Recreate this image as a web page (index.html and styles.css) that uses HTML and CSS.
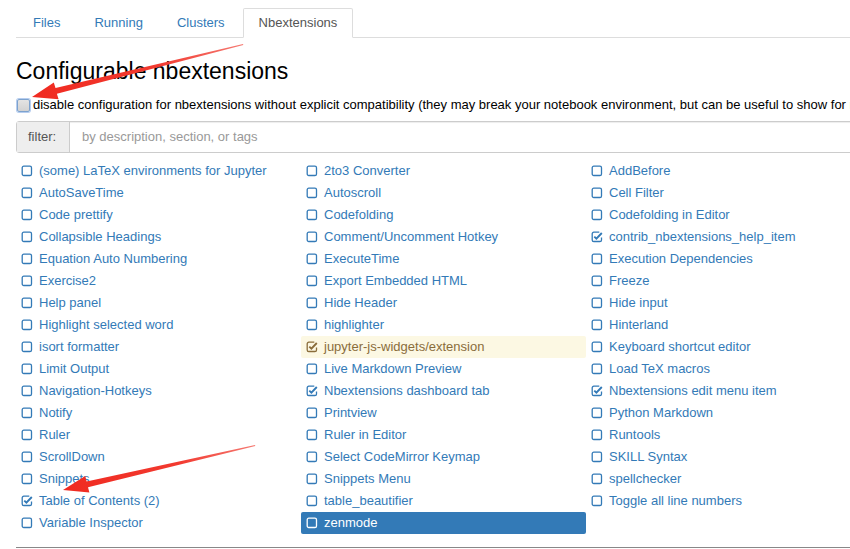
FILE: index.html
```html
<!DOCTYPE html>
<html>
<head>
<meta charset="utf-8">
<link rel="stylesheet" href="styles.css">
</head>
<body>
<div class="page">
  <ul class="tabs">
    <li class="tab"><a>Files</a></li>
    <li class="tab"><a>Running</a></li>
    <li class="tab"><a>Clusters</a></li>
    <li class="tab active"><a>Nbextensions</a></li>
  </ul>
  <h1 class="title">Configurable nbextensions</h1>
  <div class="compat">
    <span class="native-box"></span><span class="compat-text">disable configuration for nbextensions without explicit compatibility (they may break your notebook environment, but can be useful to show for <span class="warn-link">nbextension development)</span></span>
  </div>
  <div class="filter">
    <span class="filter-label">filter:</span>
    <span class="filter-input">by description, section, or tags</span>
  </div>
  <div class="columns">
    <ul class="col">
      <li class="item"><svg class="cb" viewBox="0 0 12 12"><rect x="1.2" y="1.2" width="9.3" height="9.3" rx="1.6"/></svg>(some) LaTeX environments for Jupyter</li>
      <li class="item"><svg class="cb" viewBox="0 0 12 12"><rect x="1.2" y="1.2" width="9.3" height="9.3" rx="1.6"/></svg>AutoSaveTime</li>
      <li class="item"><svg class="cb" viewBox="0 0 12 12"><rect x="1.2" y="1.2" width="9.3" height="9.3" rx="1.6"/></svg>Code prettify</li>
      <li class="item"><svg class="cb" viewBox="0 0 12 12"><rect x="1.2" y="1.2" width="9.3" height="9.3" rx="1.6"/></svg>Collapsible Headings</li>
      <li class="item"><svg class="cb" viewBox="0 0 12 12"><rect x="1.2" y="1.2" width="9.3" height="9.3" rx="1.6"/></svg>Equation Auto Numbering</li>
      <li class="item"><svg class="cb" viewBox="0 0 12 12"><rect x="1.2" y="1.2" width="9.3" height="9.3" rx="1.6"/></svg>Exercise2</li>
      <li class="item"><svg class="cb" viewBox="0 0 12 12"><rect x="1.2" y="1.2" width="9.3" height="9.3" rx="1.6"/></svg>Help panel</li>
      <li class="item"><svg class="cb" viewBox="0 0 12 12"><rect x="1.2" y="1.2" width="9.3" height="9.3" rx="1.6"/></svg>Highlight selected word</li>
      <li class="item"><svg class="cb" viewBox="0 0 12 12"><rect x="1.2" y="1.2" width="9.3" height="9.3" rx="1.6"/></svg>isort formatter</li>
      <li class="item"><svg class="cb" viewBox="0 0 12 12"><rect x="1.2" y="1.2" width="9.3" height="9.3" rx="1.6"/></svg>Limit Output</li>
      <li class="item"><svg class="cb" viewBox="0 0 12 12"><rect x="1.2" y="1.2" width="9.3" height="9.3" rx="1.6"/></svg>Navigation-Hotkeys</li>
      <li class="item"><svg class="cb" viewBox="0 0 12 12"><rect x="1.2" y="1.2" width="9.3" height="9.3" rx="1.6"/></svg>Notify</li>
      <li class="item"><svg class="cb" viewBox="0 0 12 12"><rect x="1.2" y="1.2" width="9.3" height="9.3" rx="1.6"/></svg>Ruler</li>
      <li class="item"><svg class="cb" viewBox="0 0 12 12"><rect x="1.2" y="1.2" width="9.3" height="9.3" rx="1.6"/></svg>ScrollDown</li>
      <li class="item"><svg class="cb" viewBox="0 0 12 12"><rect x="1.2" y="1.2" width="9.3" height="9.3" rx="1.6"/></svg>Snippets</li>
      <li class="item"><svg class="cb" viewBox="0 0 12 12"><path class="box" d="M8.3 1.2H2.8A1.6 1.6 0 0 0 1.2 2.8V8.9A1.6 1.6 0 0 0 2.8 10.5H8.9A1.6 1.6 0 0 0 10.5 8.9V6.4"/><path class="tick" d="M3.3 5.6L5.4 7.6L10.8 2"/></svg>Table of Contents (2)</li>
      <li class="item"><svg class="cb" viewBox="0 0 12 12"><rect x="1.2" y="1.2" width="9.3" height="9.3" rx="1.6"/></svg>Variable Inspector</li>
    </ul>
    <ul class="col">
      <li class="item"><svg class="cb" viewBox="0 0 12 12"><rect x="1.2" y="1.2" width="9.3" height="9.3" rx="1.6"/></svg>2to3 Converter</li>
      <li class="item"><svg class="cb" viewBox="0 0 12 12"><rect x="1.2" y="1.2" width="9.3" height="9.3" rx="1.6"/></svg>Autoscroll</li>
      <li class="item"><svg class="cb" viewBox="0 0 12 12"><rect x="1.2" y="1.2" width="9.3" height="9.3" rx="1.6"/></svg>Codefolding</li>
      <li class="item"><svg class="cb" viewBox="0 0 12 12"><rect x="1.2" y="1.2" width="9.3" height="9.3" rx="1.6"/></svg>Comment/Uncomment Hotkey</li>
      <li class="item"><svg class="cb" viewBox="0 0 12 12"><rect x="1.2" y="1.2" width="9.3" height="9.3" rx="1.6"/></svg>ExecuteTime</li>
      <li class="item"><svg class="cb" viewBox="0 0 12 12"><rect x="1.2" y="1.2" width="9.3" height="9.3" rx="1.6"/></svg>Export Embedded HTML</li>
      <li class="item"><svg class="cb" viewBox="0 0 12 12"><rect x="1.2" y="1.2" width="9.3" height="9.3" rx="1.6"/></svg>Hide Header</li>
      <li class="item"><svg class="cb" viewBox="0 0 12 12"><rect x="1.2" y="1.2" width="9.3" height="9.3" rx="1.6"/></svg>highlighter</li>
      <li class="item warning"><svg class="cb" viewBox="0 0 12 12"><path class="box" d="M8.3 1.2H2.8A1.6 1.6 0 0 0 1.2 2.8V8.9A1.6 1.6 0 0 0 2.8 10.5H8.9A1.6 1.6 0 0 0 10.5 8.9V6.4"/><path class="tick" d="M3.3 5.6L5.4 7.6L10.8 2"/></svg>jupyter-js-widgets/extension</li>
      <li class="item"><svg class="cb" viewBox="0 0 12 12"><rect x="1.2" y="1.2" width="9.3" height="9.3" rx="1.6"/></svg>Live Markdown Preview</li>
      <li class="item"><svg class="cb" viewBox="0 0 12 12"><path class="box" d="M8.3 1.2H2.8A1.6 1.6 0 0 0 1.2 2.8V8.9A1.6 1.6 0 0 0 2.8 10.5H8.9A1.6 1.6 0 0 0 10.5 8.9V6.4"/><path class="tick" d="M3.3 5.6L5.4 7.6L10.8 2"/></svg>Nbextensions dashboard tab</li>
      <li class="item"><svg class="cb" viewBox="0 0 12 12"><rect x="1.2" y="1.2" width="9.3" height="9.3" rx="1.6"/></svg>Printview</li>
      <li class="item"><svg class="cb" viewBox="0 0 12 12"><rect x="1.2" y="1.2" width="9.3" height="9.3" rx="1.6"/></svg>Ruler in Editor</li>
      <li class="item"><svg class="cb" viewBox="0 0 12 12"><rect x="1.2" y="1.2" width="9.3" height="9.3" rx="1.6"/></svg>Select CodeMirror Keymap</li>
      <li class="item"><svg class="cb" viewBox="0 0 12 12"><rect x="1.2" y="1.2" width="9.3" height="9.3" rx="1.6"/></svg>Snippets Menu</li>
      <li class="item"><svg class="cb" viewBox="0 0 12 12"><rect x="1.2" y="1.2" width="9.3" height="9.3" rx="1.6"/></svg>table_beautifier</li>
      <li class="item selected"><svg class="cb" viewBox="0 0 12 12"><rect x="1.2" y="1.2" width="9.3" height="9.3" rx="1.6"/></svg>zenmode</li>
    </ul>
    <ul class="col">
      <li class="item"><svg class="cb" viewBox="0 0 12 12"><rect x="1.2" y="1.2" width="9.3" height="9.3" rx="1.6"/></svg>AddBefore</li>
      <li class="item"><svg class="cb" viewBox="0 0 12 12"><rect x="1.2" y="1.2" width="9.3" height="9.3" rx="1.6"/></svg>Cell Filter</li>
      <li class="item"><svg class="cb" viewBox="0 0 12 12"><rect x="1.2" y="1.2" width="9.3" height="9.3" rx="1.6"/></svg>Codefolding in Editor</li>
      <li class="item"><svg class="cb" viewBox="0 0 12 12"><path class="box" d="M8.3 1.2H2.8A1.6 1.6 0 0 0 1.2 2.8V8.9A1.6 1.6 0 0 0 2.8 10.5H8.9A1.6 1.6 0 0 0 10.5 8.9V6.4"/><path class="tick" d="M3.3 5.6L5.4 7.6L10.8 2"/></svg>contrib_nbextensions_help_item</li>
      <li class="item"><svg class="cb" viewBox="0 0 12 12"><rect x="1.2" y="1.2" width="9.3" height="9.3" rx="1.6"/></svg>Execution Dependencies</li>
      <li class="item"><svg class="cb" viewBox="0 0 12 12"><rect x="1.2" y="1.2" width="9.3" height="9.3" rx="1.6"/></svg>Freeze</li>
      <li class="item"><svg class="cb" viewBox="0 0 12 12"><rect x="1.2" y="1.2" width="9.3" height="9.3" rx="1.6"/></svg>Hide input</li>
      <li class="item"><svg class="cb" viewBox="0 0 12 12"><rect x="1.2" y="1.2" width="9.3" height="9.3" rx="1.6"/></svg>Hinterland</li>
      <li class="item"><svg class="cb" viewBox="0 0 12 12"><rect x="1.2" y="1.2" width="9.3" height="9.3" rx="1.6"/></svg>Keyboard shortcut editor</li>
      <li class="item"><svg class="cb" viewBox="0 0 12 12"><rect x="1.2" y="1.2" width="9.3" height="9.3" rx="1.6"/></svg>Load TeX macros</li>
      <li class="item"><svg class="cb" viewBox="0 0 12 12"><path class="box" d="M8.3 1.2H2.8A1.6 1.6 0 0 0 1.2 2.8V8.9A1.6 1.6 0 0 0 2.8 10.5H8.9A1.6 1.6 0 0 0 10.5 8.9V6.4"/><path class="tick" d="M3.3 5.6L5.4 7.6L10.8 2"/></svg>Nbextensions edit menu item</li>
      <li class="item"><svg class="cb" viewBox="0 0 12 12"><rect x="1.2" y="1.2" width="9.3" height="9.3" rx="1.6"/></svg>Python Markdown</li>
      <li class="item"><svg class="cb" viewBox="0 0 12 12"><rect x="1.2" y="1.2" width="9.3" height="9.3" rx="1.6"/></svg>Runtools</li>
      <li class="item"><svg class="cb" viewBox="0 0 12 12"><rect x="1.2" y="1.2" width="9.3" height="9.3" rx="1.6"/></svg>SKILL Syntax</li>
      <li class="item"><svg class="cb" viewBox="0 0 12 12"><rect x="1.2" y="1.2" width="9.3" height="9.3" rx="1.6"/></svg>spellchecker</li>
      <li class="item"><svg class="cb" viewBox="0 0 12 12"><rect x="1.2" y="1.2" width="9.3" height="9.3" rx="1.6"/></svg>Toggle all line numbers</li>
    </ul>
  </div>
  <hr class="rule">
</div>
<svg class="annot" width="850" height="549" viewBox="0 0 850 549">
  <defs>
    <linearGradient id="g1" x1="243" y1="44" x2="32" y2="97" gradientUnits="userSpaceOnUse">
      <stop offset="0" stop-color="#f57a72"/>
      <stop offset="0.4" stop-color="#f23a30"/>
      <stop offset="1" stop-color="#f02a20"/>
    </linearGradient>
    <linearGradient id="g2" x1="255" y1="445" x2="63" y2="490" gradientUnits="userSpaceOnUse">
      <stop offset="0" stop-color="#f57a72"/>
      <stop offset="0.4" stop-color="#f23a30"/>
      <stop offset="1" stop-color="#f02a20"/>
    </linearGradient>
  </defs>
  <polygon fill="url(#g1)" points="243,44 55.5,88 53.8,82.5 32,97 58.6,99.2 56.9,93.8 243.3,45"/>
  <polygon fill="url(#g2)" points="255,445 86.6,481.4 85.2,476 63,490 89.4,492.6 88,487.2 255.3,446"/>
</svg>
</body>
</html>
```

FILE: styles.css
```css
html, body {
  margin: 0;
  padding: 0;
  overflow: hidden;
  background: #fff;
}
body {
  font-family: "Liberation Sans", Arial, sans-serif;
  font-size: 13px;
  line-height: 18px;
  color: #000;
}
.page {
  width: 855px;
  padding: 8px 0 0 16px;
}
.tabs {
  list-style: none;
  margin: 0;
  padding: 0 0 0 1px;
  display: flex;
  border-bottom: 1px solid #ddd;
  width: 900px;
}
.tab {
  margin-right: 2px;
  margin-bottom: -1px;
}
.tab a {
  display: block;
  padding: 5px 15px;
  line-height: 18px;
  border: 1px solid transparent;
  border-radius: 2px 2px 0 0;
  color: #337ab7;
}
.tab.active a {
  color: #555;
  background: #fff;
  border-color: #ddd #ddd transparent #ddd;
}
.title {
  font-size: 23px;
  font-weight: normal;
  line-height: 25px;
  margin: 21px 0 12px;
  color: #000;
}
.compat {
  display: flex;
  align-items: center;
  white-space: nowrap;
  height: 18px;
  width: 900px;
}
.native-box {
  width: 11px;
  height: 11px;
  border: 1px solid #7da2ce;
  border-radius: 2px;
  background: linear-gradient(#e3e3e3, #d2d2d2);
  box-shadow: 0 0 0 1px #b6cdef;
  margin: 1px 3px 0 1px;
  flex: none;
}
.compat-text {
  color: #000;
}
.warn-link {
  color: #c87f0a;
}
.filter {
  display: flex;
  margin-top: 7px;
  height: 32px;
  width: 900px;
  border: 1px solid #ccc;
  border-radius: 3px 0 0 3px;
  box-sizing: border-box;
  box-shadow: inset 0 1px 1px rgba(0,0,0,0.075);
}
.filter-label {
  width: 53px;
  background: #eee;
  border-right: 1px solid #ccc;
  color: #555;
  display: flex;
  align-items: center;
  padding-left: 11px;
  box-sizing: border-box;
}
.filter-input {
  display: flex;
  align-items: center;
  padding-left: 12px;
  color: #999;
}
.columns {
  display: flex;
  margin-top: 7px;
}
.col {
  list-style: none;
  margin: 0;
  padding: 0;
  width: 285px;
}
.item {
  display: flex;
  align-items: center;
  height: 22px;
  padding-left: 5px;
  color: #337ab7;
  white-space: nowrap;
  border-radius: 2px;
}
.cb {
  width: 12px;
  height: 12px;
  margin-right: 6px;
  flex: none;
  fill: none;
  stroke: currentColor;
  stroke-width: 1.3;
}
.cb .tick {
  stroke-width: 1.9;
}
.item.warning {
  background: #fcf8e3;
  color: #8a6d3b;
}
.item.selected {
  background: #337ab7;
  color: #fff;
}
.rule {
  margin: 13px 0 0;
  border: 0;
  border-top: 1px solid #888;
  width: 900px;
}
.annot {
  position: absolute;
  left: 0;
  top: 0;
  pointer-events: none;
}
```
